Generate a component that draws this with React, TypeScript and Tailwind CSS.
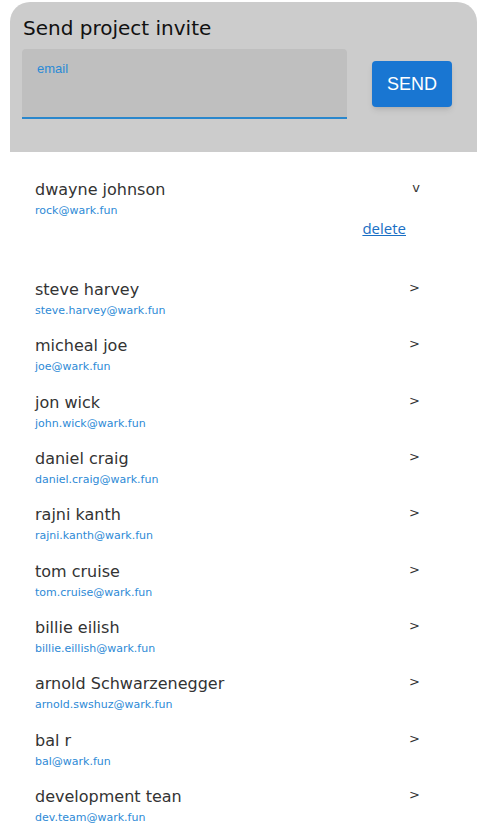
import React from "react";

const members = [
  { id: 1, name: "dwayne johnson", email: "rock@wark.fun", open: true },
  { id: 2, name: "steve harvey", email: "steve.harvey@wark.fun" },
  { id: 3, name: "micheal joe", email: "joe@wark.fun" },
  { id: 4, name: "jon wick", email: "john.wick@wark.fun" },
  { id: 5, name: "daniel craig", email: "daniel.craig@wark.fun" },
  { id: 6, name: "rajni kanth", email: "rajni.kanth@wark.fun" },
  { id: 7, name: "tom cruise", email: "tom.cruise@wark.fun" },
  { id: 8, name: "billie eilish", email: "billie.eillish@wark.fun" },
  { id: 9, name: "arnold Schwarzenegger", email: "arnold.swshuz@wark.fun" },
  { id: 10, name: "bal r", email: "bal@wark.fun" },
  { id: 11, name: "development tean", email: "dev.team@wark.fun" },
];

const InviteBox = () => {
  return (
    <div className="ml-[10px] mr-[10px] mt-[2px] bg-[#cccccc] rounded-t-[20px] pl-[12px] pr-[25px] pt-[12px] pb-[33px]">
      <p className="font-['DejaVu_Sans',sans-serif] text-[20px] leading-[28px] text-[#111] pl-px">
        Send project invite
      </p>
      <div className="mt-[7px] flex items-center justify-between">
        <div className="w-[325px] h-[70px] bg-[#bfbfbf] rounded-t-[4px] border-b-2 border-[#2a87cc] pl-[15px] pt-[12px]">
          <p className="font-['Liberation_Sans',Arial,sans-serif] text-[13px] leading-[16px] text-[#2a8ad6]">
            email
          </p>
        </div>
        <button className="w-[80px] h-[46px] bg-[#1976d2] rounded-[4px] shadow-md text-white font-['Liberation_Sans',Arial,sans-serif] text-[18px] uppercase">
          Send
        </button>
      </div>
    </div>
  );
};

const MemberList = () => {
  return (
    <div className="pt-[27px] pl-[35px] pr-[67px]">
      {members.map(({ id, name, email, open }) => (
        <div key={id} className={open ? "pb-[42px]" : "pb-[16.33px]"}>
          <div className="flex justify-between">
            <div>
              <p className="font-['DejaVu_Sans',sans-serif] text-[16px] leading-[22px] text-[#333]">
                {name}
              </p>
              <p className="mt-[2px] font-['DejaVu_Sans',sans-serif] text-[11px] leading-[16px] text-[#2d8ad6]">
                {email}
              </p>
            </div>
            <span className="font-['DejaVu_Sans',sans-serif] text-[13px] leading-[18px] text-[#333]">
              {open ? "v" : ">"}
            </span>
          </div>
          {open && (
            <div className="flex justify-end pr-[14px]">
              <a className="font-['Open_Sans',sans-serif] text-[15px] leading-[18px] text-[#1a6fc4] underline">
                delete
              </a>
            </div>
          )}
        </div>
      ))}
    </div>
  );
};

export default function App() {
  return (
    <div className="bg-white min-h-[830px] w-[487px]">
      <InviteBox />
      <MemberList />
    </div>
  );
}
